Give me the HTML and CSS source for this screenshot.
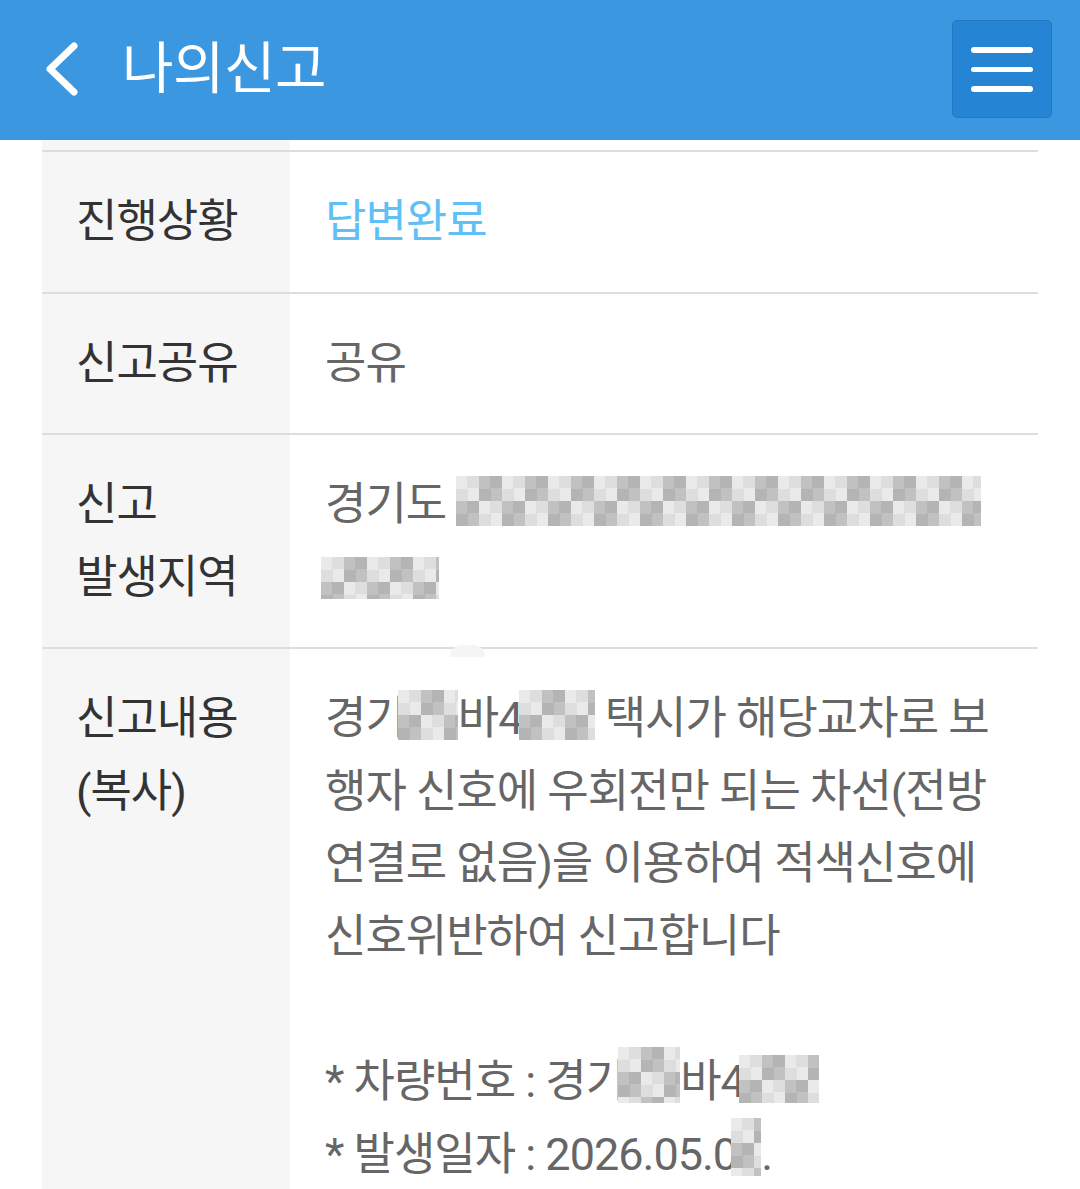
FILE: index.html
```html
<!DOCTYPE html>
<html lang="ko">
<head>
<meta charset="utf-8">
<title>나의신고</title>
<link rel="stylesheet" href="styles.css">
</head>
<body>
<header class="topbar">
  <div class="topbar-left">
    <svg class="back" width="40" height="56" viewBox="0 0 40 56">
      <path d="M32 5 L8 28 L32 51" fill="none" stroke="#fff" stroke-width="7" stroke-linecap="round" stroke-linejoin="round"/>
    </svg>
    <h1 class="title">나의신고</h1>
  </div>
  <button class="menu" type="button" aria-label="메뉴">
    <span class="bar"></span>
    <span class="bar"></span>
    <span class="bar"></span>
  </button>
</header>
<main class="content">
  <div class="table">
    <div class="row spacer"><div class="th"></div><div class="td"></div></div>
    <div class="row">
      <div class="th">진행상황</div>
      <div class="td status">답변완료</div>
    </div>
    <div class="row">
      <div class="th">신고공유</div>
      <div class="td">공유</div>
    </div>
    <div class="row">
      <div class="th">신고<br>발생지역</div>
      <div class="td">경기도 <span class="mosaic m1"></span><br><span class="mosaic m2"></span></div>
    </div>
    <div class="row last">
      <span class="bump"></span>
      <div class="th">신고내용<br>(복사)</div>
      <div class="td">경기<span class="mosaic m3"></span>바4<span class="mosaic m4"></span> 택시가 해당교차로 보<br>행자 신호에 우회전만 되는 차선(전방<br>연결로 없음)을 이용하여 적색신호에<br>신호위반하여 신고합니다<br><br>* 차량번호 : 경기<span class="mosaic m5"></span>바4<span class="mosaic m6"></span><br>* 발생일자 : 2026.05.0<span class="mosaic m7"></span>.</div>
    </div>
  </div>
</main>
</body>
</html>
```
FILE: styles.css
```css
* { box-sizing: border-box; }
html, body { margin: 0; padding: 0; background: #fff; }
body {
  width: 1080px;
  height: 1189px;
  overflow: hidden;
  font-family: Roboto, "Noto Sans CJK KR", sans-serif;
}
.topbar {
  height: 140px;
  background: #3a97e0;
  display: flex;
  align-items: flex-start;
  justify-content: space-between;
  padding: 0 28px 0 42px;
}
.topbar-left {
  display: flex;
  align-items: center;
  height: 140px;
}
.back { display: block; margin-top: -2px; }
.title {
  margin: -2px 0 0 40px;
  color: #fff;
  font-size: 56px;
  font-weight: 400;
  letter-spacing: -0.5px;
  line-height: 1;
}
.menu {
  margin-top: 20px;
  width: 100px;
  height: 98px;
  background: #2585d4;
  border: 1px solid #2179c4;
  border-radius: 5px;
  padding: 26px 0 0 18px;
  display: flex;
  flex-direction: column;
  gap: 14px;
}
.bar {
  display: block;
  width: 62px;
  height: 5.5px;
  background: #fff;
  border-radius: 3px;
}
.content { padding: 0 42px; }
.table { width: 996px; }
.row {
  display: flex;
  border-top: 2px solid #dddddd;
  position: relative;
}
.row.spacer { border-top: none; height: 10px; }
.row.spacer .th, .row.spacer .td { padding: 0; }
.th {
  width: 248px;
  flex: none;
  background: #f6f6f6;
  color: #333;
  font-size: 45px;
  line-height: 72.5px;
  letter-spacing: -1px;
  padding: 34px 0 33px 34px;
}
.td {
  flex: 1;
  color: #666;
  font-size: 45px;
  line-height: 72.5px;
  letter-spacing: -1px;
  padding: 34px 0 33px 35px;
}
.status { color: #5fc0f6; }
.row.last .th, .row.last .td { padding-bottom: 80px; }
.mosaic {
  display: inline-block;
  vertical-align: -6px;
  height: 50px;
  background:
    repeating-conic-gradient(rgba(160,160,160,.5) 0 25%, rgba(240,240,240,.55) 0 50%) 0 0 / 46px 50px,
    repeating-conic-gradient(#c8c8c8 0 25%, #e2e2e2 0 50%) 0 0 / 23px 25px;
}
.m1 { width: 525px; margin-left: 0; }
.m2 { width: 118px; height: 42px; margin-left: -4px; }
.m3 { width: 60px; margin-left: -8px; }
.m4 { width: 76px; margin-left: -4px; }
.m5 { width: 62px; height: 56px; margin-left: -8px; }
.m6 { width: 80px; height: 48px; margin-left: -6px; }
.m7 { width: 30px; height: 58px; margin-left: -6px; }
.bump {
  position: absolute;
  left: 408px;
  top: -4px;
  width: 35px;
  height: 12px;
  background: #f5f5f5;
  border-radius: 18px 18px 0 0;
}
```
